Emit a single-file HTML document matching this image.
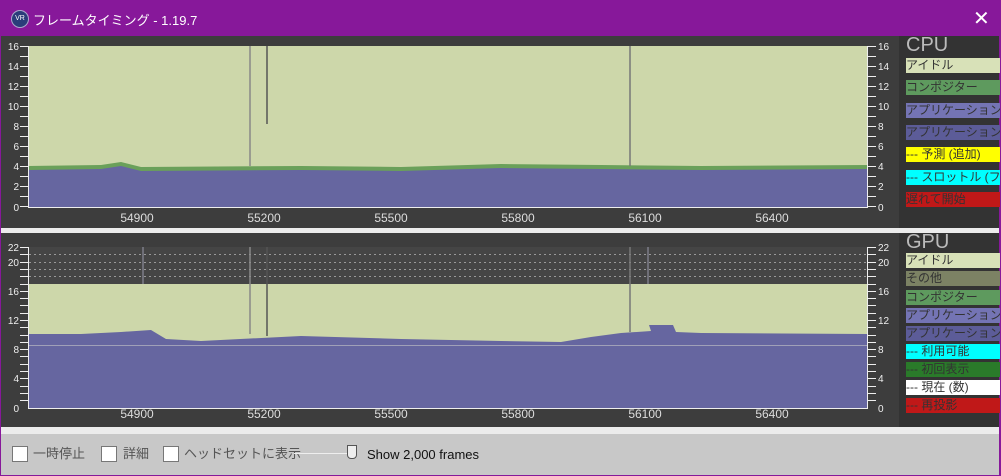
<!DOCTYPE html>
<html><head><meta charset="utf-8"><style>
body{margin:0;width:1001px;height:476px;overflow:hidden;background:#87189a;font-family:"Liberation Sans","Noto Sans CJK JP",sans-serif;position:relative}
.t{position:absolute;left:0;top:0;width:1001px;height:36px;background:#87189a;color:#fff;font-size:13px}
.lg{position:absolute;left:906px;width:94px;height:15px;font-size:12px;line-height:15px;white-space:nowrap;overflow:hidden;color:#333}
.cb{position:absolute;top:446px;width:14px;height:14px;background:#fff;border:1px solid #777}
.bl{position:absolute;top:446px;font-size:13px;line-height:16px;color:#555}
</style></head><body>
<div class="t">
<div style="position:absolute;left:11px;top:10px;width:16px;height:16px;border-radius:50%;background:#2a3d7a;border:1px solid #aac;font-size:7px;line-height:16px;text-align:center;color:#fff">VR</div>
<div style="position:absolute;left:33px;top:10px">フレームタイミング - 1.19.7</div>
<div style="position:absolute;left:973px;top:6px;font-size:20px">✕</div>
</div>
<div style="position:absolute;left:1px;top:36px;width:998px;height:398px;background:#ececec"></div>
<svg style="position:absolute;left:1px;top:36px" width="998" height="398" font-family="Liberation Sans" >
<rect x="0" y="0" width="898" height="192" fill="#3d3d3d"/>
<rect x="898" y="0" width="100" height="192" fill="#333"/>
<rect x="0" y="197" width="898" height="194" fill="#3d3d3d"/>
<rect x="898" y="197" width="100" height="194" fill="#333"/>
<!-- CPU plot -->
<rect x="27" y="10" width="840" height="161" fill="#cdd7aa"/>
<path d="M27 130 L100 129 L120 126 L140 131 L300 130 L400 131 L500 128 L600 129 L700 130 L867 129 L867 171 L27 171Z" fill="#6aa05a"/>
<path d="M27 134 L100 133 L120 130 L140 135 L300 134 L400 135 L500 132 L600 133 L700 134 L867 133 L867 171 L27 171Z" fill="#6666a0"/>
<line x1="249" y1="10" x2="249" y2="130" stroke="#888" stroke-width="1.5"/>
<line x1="266" y1="10" x2="266" y2="88" stroke="#555" stroke-width="1.5"/>
<line x1="629" y1="10" x2="629" y2="130" stroke="#777" stroke-width="1.5"/>
<g fill="#ddd" font-size="12" text-anchor="middle">
<text x="136" y="186">54900</text><text x="263" y="186">55200</text><text x="390" y="186">55500</text><text x="517" y="186">55800</text><text x="644" y="186">56100</text><text x="771" y="186">56400</text>
<text x="136" y="382">54900</text><text x="263" y="382">55200</text><text x="390" y="382">55500</text><text x="517" y="382">55800</text><text x="644" y="382">56100</text><text x="771" y="382">56400</text>
</g>
<g stroke="#eee" stroke-width="1">
<path d="M19 10.5h8M19 20.5h8M19 30.5h8M19 40.5h8M19 50.5h8M19 60.5h8M19 70.5h8M19 80.5h8M19 90.5h8M19 100.5h8M19 110.5h8M19 120.5h8M19 130.5h8M19 140.5h8M19 150.5h8M19 160.5h8M19 170.5h8"/>
<path d="M867 10.5h8M867 20.5h8M867 30.5h8M867 40.5h8M867 50.5h8M867 60.5h8M867 70.5h8M867 80.5h8M867 90.5h8M867 100.5h8M867 110.5h8M867 120.5h8M867 130.5h8M867 140.5h8M867 150.5h8M867 160.5h8M867 170.5h8"/>
<path d="M27.5 10v161M866.5 10v161M27 171.5h840"/>
<path d="M19 211.5h8M19 218.5h8M19 226.5h8M19 233.5h8M19 240.5h8M19 248.5h8M19 255.5h8M19 262.5h8M19 269.5h8M19 277.5h8M19 284.5h8M19 291.5h8M19 299.5h8M19 306.5h8M19 313.5h8M19 320.5h8M19 328.5h8M19 335.5h8M19 342.5h8M19 350.5h8M19 357.5h8M19 364.5h8"/>
<path d="M867 211.5h8M867 218.5h8M867 226.5h8M867 233.5h8M867 240.5h8M867 248.5h8M867 255.5h8M867 262.5h8M867 269.5h8M867 277.5h8M867 284.5h8M867 291.5h8M867 299.5h8M867 306.5h8M867 313.5h8M867 320.5h8M867 328.5h8M867 335.5h8M867 342.5h8M867 350.5h8M867 357.5h8M867 364.5h8"/>
<path d="M27.5 211v161M866.5 211v161M27 372.5h840"/>
</g>
<g fill="#eee" font-size="10" text-anchor="end">
<text x="18" y="14">16</text><text x="18" y="34">14</text><text x="18" y="54">12</text><text x="18" y="74">10</text><text x="18" y="94">8</text><text x="18" y="114">6</text><text x="18" y="134">4</text><text x="18" y="154">2</text><text x="18" y="175">0</text>
<text x="18" y="215">22</text><text x="18" y="230">20</text><text x="18" y="259">16</text><text x="18" y="288">12</text><text x="18" y="317">8</text><text x="18" y="346">4</text><text x="18" y="376">0</text>
</g>
<g fill="#eee" font-size="10">
<text x="877" y="14">16</text><text x="877" y="34">14</text><text x="877" y="54">12</text><text x="877" y="74">10</text><text x="877" y="94">8</text><text x="877" y="114">6</text><text x="877" y="134">4</text><text x="877" y="154">2</text><text x="877" y="175">0</text>
<text x="877" y="215">22</text><text x="877" y="230">20</text><text x="877" y="259">16</text><text x="877" y="288">12</text><text x="877" y="317">8</text><text x="877" y="346">4</text><text x="877" y="376">0</text>
</g>
<!-- GPU plot -->
<rect x="28" y="211" width="838" height="37" fill="#454545"/>
<g stroke="#999" stroke-dasharray="2,3"><path d="M28 218.5h838M28 226.5h838M28 233.5h838M28 240.5h838"/></g>
<rect x="28" y="248" width="838" height="124" fill="#cdd7aa"/>
<path d="M28 298 L80 298 L120 296 L150 294 L165 303 L200 305 L300 300 L400 303 L500 305 L560 306 L590 301 L620 297 L650 295 L648 289 L672 289 L675 296 L700 297 L866 298 L866 372 L28 372Z" fill="#6666a0"/>
<line x1="28" y1="309.5" x2="866" y2="309.5" stroke="#a0a0b8"/>
<line x1="142" y1="211" x2="142" y2="248" stroke="#99a" /><line x1="249" y1="211" x2="249" y2="298" stroke="#888" stroke-width="1.5"/>
<line x1="266" y1="211" x2="266" y2="300" stroke="#555" stroke-width="1.5"/>
<line x1="629" y1="211" x2="629" y2="296" stroke="#777" stroke-width="1.5"/><line x1="647" y1="211" x2="647" y2="248" stroke="#99a"/>
<text x="905" y="15" fill="#bbb" font-size="20">CPU</text>
<text x="905" y="212" fill="#bbb" font-size="20">GPU</text>
</svg>
<div class="lg" style="top:58px;background:#d8e1b8">アイドル</div>
<div class="lg" style="top:80px;background:#5e9a5e">コンポジター</div>
<div class="lg" style="top:103px;background:#7474b4">アプリケーション(表示)</div>
<div class="lg" style="top:125px;background:#5c5c98">アプリケーション(待機)</div>
<div class="lg" style="top:147px;background:#ffff00">--- 予測 (追加)</div>
<div class="lg" style="top:170px;background:#00ffff">--- スロットル (フレーム)</div>
<div class="lg" style="top:192px;background:#c01818">遅れて開始</div>
<div class="lg" style="top:253px;background:#d8e1b8">アイドル</div>
<div class="lg" style="top:271px;background:#7c8264">その他</div>
<div class="lg" style="top:290px;background:#5e9a5e">コンポジター</div>
<div class="lg" style="top:308px;background:#7474b4">アプリケーション(表示)</div>
<div class="lg" style="top:326px;background:#5c5c98">アプリケーション(待機)</div>
<div class="lg" style="top:344px;background:#00ffff">--- 利用可能</div>
<div class="lg" style="top:362px;background:#2a7a2a">--- 初回表示</div>
<div class="lg" style="top:380px;background:#fff">--- 現在 (数)</div>
<div class="lg" style="top:398px;background:#c01818">--- 再投影</div>
<div style="position:absolute;left:1px;top:434px;width:998px;height:41px;background:#c8c8c8"></div>
<div class="cb" style="left:12px"></div><div class="bl" style="left:33px">一時停止</div>
<div class="cb" style="left:101px"></div><div class="bl" style="left:123px">詳細</div>
<div class="cb" style="left:163px"></div><div class="bl" style="left:184px">ヘッドセットに表示</div>
<div style="position:absolute;left:294px;top:453px;width:56px;height:1px;background:#eee"></div>
<div style="position:absolute;left:347px;top:445px;width:8px;height:12px;border:1px solid #555;background:#eee;border-radius:0 0 4px 4px"></div>
<div style="position:absolute;left:367px;top:447px;font-size:13px;color:#111">Show 2,000 frames</div>
</body></html>
